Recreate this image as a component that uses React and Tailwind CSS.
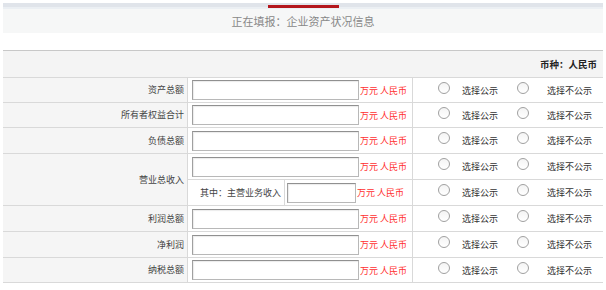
import React from 'react';

const font = { fontFamily: '"Noto Sans CJK SC", "Noto Sans", sans-serif' };

const Radio = ({ label, gap }) => (
    <div className="flex items-center">
        <span className="w-[12px] h-[12px] rounded-full border border-[#a0a0a0] bg-gradient-to-b from-[#f4f4f4] to-white mb-[5px]" />
        <span className={`${gap} text-[9px] text-[#333] leading-none`}>{label}</span>
    </div>
);

const RadioPair = () => (
    <div className="flex items-center h-full pl-[25px]">
        <div className="w-[79px]"><Radio label="选择公示" gap="ml-[12px]" /></div>
        <Radio label="选择不公示" gap="ml-[18px]" />
    </div>
);

const Amount = ({ width = 'w-[167px]' }) => (
    <div className="flex items-center">
        <div className={`${width} h-[20px] bg-white border border-[#b8b8b8] border-t-[#909090] border-l-[#a0a0a0] shadow-[inset_1px_1px_1px_rgba(0,0,0,0.08)]`} />
        <span className="ml-[1px] text-[9px] text-[#ff3030] leading-none whitespace-nowrap">万元 人民币</span>
    </div>
);

const Row = ({ label, h }) => (
    <div className={`grid grid-cols-[185px_225px_190px] border-b border-[#d9d9d9] ${h}`}>
        <div className="bg-[#f5f5f5] border-r border-[#d9d9d9] flex items-center justify-end pr-[3px] text-[9px] text-[#444]">
            {label}
        </div>
        <div className="flex items-center pl-[4px] border-r border-[#d9d9d9]">
            <Amount />
        </div>
        <RadioPair />
    </div>
);

export default function App() {
    return (
        <div className="w-[606px] h-[290px] bg-white overflow-hidden px-[3px] pt-[3px]" style={font}>
            <div className="h-[4px] bg-[#e0e4ea] flex justify-center">
                <div className="w-[71px] h-[3px] mt-[2px] bg-[#b4161c]" />
            </div>
            <div className="h-[2px] bg-[#ebeff3]" />
            <div className="h-[24px] bg-[#f6f7f7] flex items-center justify-center text-[11px] text-[#888]">
                正在填报：企业资产状况信息
            </div>
            <div className="h-[17px]" />
            <div className="border-t border-[#c8c8c8]">
                <div className="h-[27px] bg-[#f4f4f4] border-b border-[#d9d9d9] flex items-center justify-end pr-[6px] text-[9.5px] font-bold text-[#222]">
                    币种：人民币
                </div>
                <Row label="资产总额" h="h-[25px]" />
                <Row label="所有者权益合计" h="h-[25px]" />
                <Row label="负债总额" h="h-[26px]" />
                <div className="grid grid-cols-[185px_225px_190px] border-b border-[#d9d9d9] h-[52px]">
                    <div className="bg-[#f5f5f5] border-r border-[#d9d9d9] flex items-center justify-end pr-[3px] text-[9px] text-[#444]">
                        营业总收入
                    </div>
                    <div className="flex flex-col border-r border-[#d9d9d9]">
                        <div className="h-[26px] flex items-center pl-[4px] border-b border-[#d9d9d9]">
                            <Amount />
                        </div>
                        <div className="flex-1 flex items-center">
                            <div className="w-[97px] h-full flex items-center justify-end pr-[3px] border-r border-[#d9d9d9] text-[9px] text-[#444]">
                                其中：主营业务收入
                            </div>
                            <div className="pl-[2px]">
                                <Amount width="w-[69px]" />
                            </div>
                        </div>
                    </div>
                    <div className="flex flex-col">
                        <div className="h-[26px] border-b border-[#d9d9d9]"><RadioPair /></div>
                        <div className="flex-1"><RadioPair /></div>
                    </div>
                </div>
                <Row label="利润总额" h="h-[26px]" />
                <Row label="净利润" h="h-[26px]" />
                <Row label="纳税总额" h="h-[25px]" />
            </div>
        </div>
    );
}
